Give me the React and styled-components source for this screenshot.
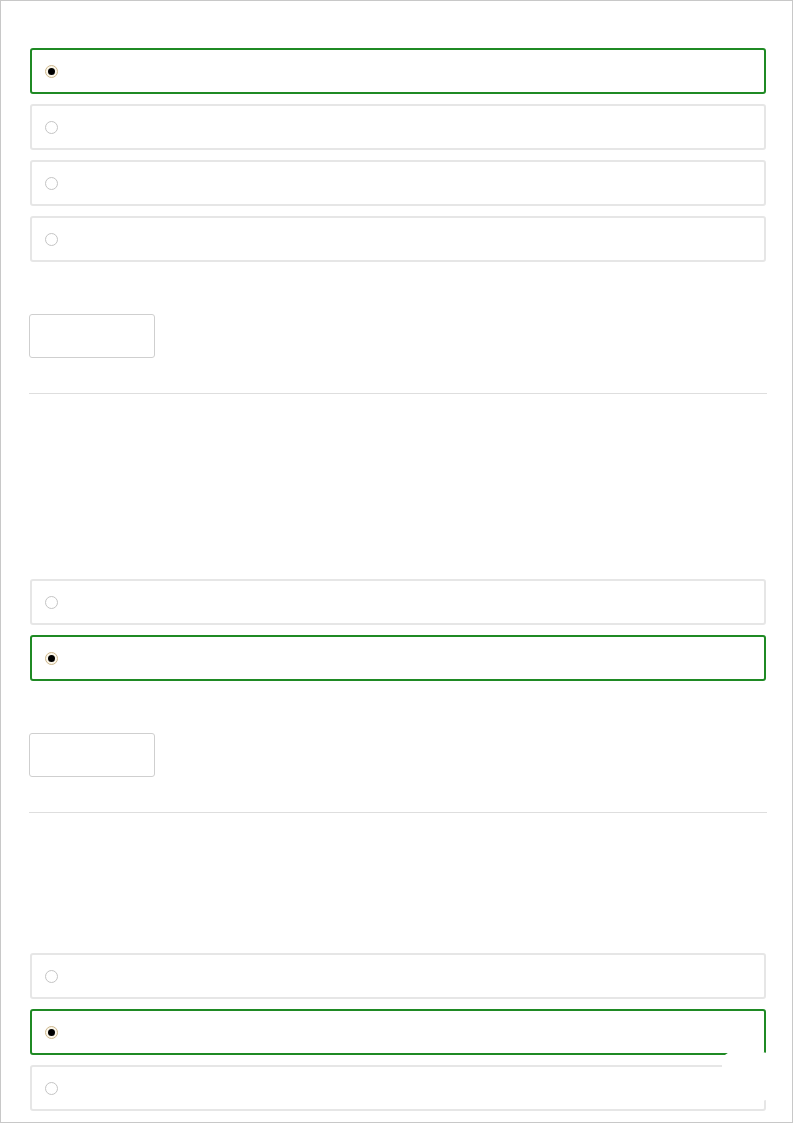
import React from 'react';
import styled, { createGlobalStyle } from 'styled-components';

const GlobalStyle = createGlobalStyle`
  html, body {
    margin: 0;
    padding: 0;
    background: #fff;
    font-family: 'Liberation Sans', Arial, sans-serif;
  }
  * {
    box-sizing: border-box;
  }
`;

const questions = [
  { id: 'q1', promptHeight: 0, options: 4, selected: 0 },
  { id: 'q2', promptHeight: 185, options: 2, selected: 1 },
  { id: 'q3', promptHeight: 140, options: 3, selected: 1, last: true },
];

export default function App() {
  return (
    <>
      <GlobalStyle />
      <Page>
        <Content>
          {questions.map((q) => (
            <Question key={q.id} data-file="quiz/Question">
              <Prompt $height={q.promptHeight} />
              <OptionList>
                {Array.from({ length: q.options }).map((_, i) => (
                  <Option key={i} $selected={i === q.selected}>
                    <Radio $checked={i === q.selected} />
                    <OptionLabel />
                  </Option>
                ))}
              </OptionList>
              {!q.last && (
                <>
                  <SubmitButton type="button" />
                  <Divider />
                </>
              )}
            </Question>
          ))}
        </Content>
        <FloatingBadge />
      </Page>
    </>
  );
}

const Page = styled.div`
  position: relative;
  width: 793px;
  height: 1123px;
  border: 1px solid #c8c8c8;
  overflow: hidden;
  background: #fff;
`;

const Content = styled.div`
  display: flex;
  flex-flow: column nowrap;
  padding: 47px 25px 0 28px;
`;

const Question = styled.section`
  display: flex;
  flex-flow: column nowrap;
`;

const Prompt = styled.div`
  height: ${(p) => p.$height}px;
`;

const OptionList = styled.div`
  display: flex;
  flex-flow: column nowrap;
  gap: 10px;
  padding: 0 1px;
`;

const Option = styled.label`
  display: flex;
  flex-flow: row nowrap;
  align-items: center;
  height: 46px;
  padding: 0 13px;
  border: 2px solid ${(p) => (p.$selected ? '#1f8a24' : '#e6e6e6')};
  border-radius: 3px;
  background: #fff;
  cursor: pointer;
`;

const Radio = styled.span`
  position: relative;
  flex: 0 0 auto;
  width: 13px;
  height: 13px;
  border-radius: 50%;
  border: 1px solid ${(p) => (p.$checked ? '#cdb88e' : '#c4c4c4')};
  background: ${(p) => (p.$checked ? '#fbf6ea' : '#fff')};

  &::after {
    content: '';
    display: ${(p) => (p.$checked ? 'block' : 'none')};
    position: absolute;
    left: 50%;
    top: 50%;
    width: 7px;
    height: 7px;
    margin: -3.5px 0 0 -3.5px;
    border-radius: 50%;
    background: #000;
  }
`;

const OptionLabel = styled.span`
  margin-left: 10px;
  font-size: 14px;
  color: #333;
`;

const SubmitButton = styled.button`
  align-self: flex-start;
  width: 126px;
  height: 44px;
  margin-top: 52px;
  border: 1px solid #cfcfcf;
  border-radius: 3px;
  background: #fff;
`;

const Divider = styled.hr`
  width: 100%;
  height: 0;
  margin: 35px 0 0;
  border: 0;
  border-top: 1px solid #dedede;
`;

const FloatingBadge = styled.div`
  position: absolute;
  left: 721px;
  top: 1051px;
  width: 50px;
  height: 49px;
  border-radius: 10px;
  background: #fff;
`;
